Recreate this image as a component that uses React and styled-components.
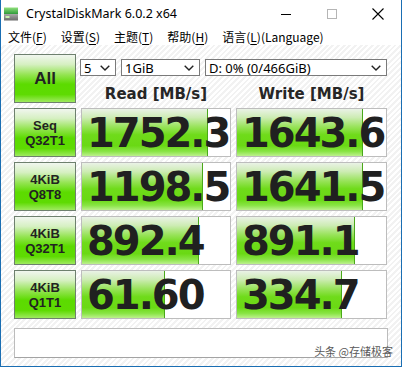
import styled, { createGlobalStyle } from "styled-components";

const GlobalStyle = createGlobalStyle`
  html, body {
    margin: 0;
    padding: 0;
    background: #fff;
  }
  body {
    font-family: "Noto Sans", "Noto Sans CJK SC", sans-serif;
  }
`;

const results = [
  { label: ["Seq", "Q32T1"], read: "1752.3", write: "1643.6" },
  { label: ["4KiB", "Q8T8"], read: "1198.5", write: "1641.5" },
  { label: ["4KiB", "Q32T1"], read: "892.4", write: "891.1" },
  { label: ["4KiB", "Q1T1"], read: "61.60", write: "334.7" },
];

// CrystalDiskMark draws the bar on a log scale
const barWidth = (v) => Math.min(100, (Math.log10(parseFloat(v) * 10) / 5) * 100);

const menus = [
  ["文件(", "F", ")"],
  ["设置(", "S", ")"],
  ["主题(", "T", ")"],
  ["帮助(", "H", ")"],
  ["语言(", "L", ")(Language)"],
];

function App() {
  return (
    <>
      <GlobalStyle />
      <Window>
        <TitleBar>
          <AppIcon />
          <Title>CrystalDiskMark 6.0.2 x64</Title>
          <Controls>
            <Control>
              <svg width="10" height="10" viewBox="0 0 10 10">
                <line x1="0" y1="5.5" x2="10" y2="5.5" stroke="#000" strokeWidth="1" />
              </svg>
            </Control>
            <Control>
              <svg width="10" height="10" viewBox="0 0 10 10">
                <rect x="0.5" y="0.5" width="9" height="9" fill="none" stroke="#b5b5b5" strokeWidth="1" />
              </svg>
            </Control>
            <Control>
              <svg width="12" height="12" viewBox="0 0 12 12">
                <path d="M0.5 0.5 L11.5 11.5 M11.5 0.5 L0.5 11.5" stroke="#000" strokeWidth="1.1" />
              </svg>
            </Control>
          </Controls>
        </TitleBar>

        <MenuBar>
          {menus.map(([a, key, b]) => (
            <MenuItem key={key}>
              {a}
              <u>{key}</u>
              {b}
            </MenuItem>
          ))}
        </MenuBar>

        <Body>
          <Board>
            <LabelButton $big>All</LabelButton>
            <TopPanel>
              <SelectRow>
                <Select $w={36}>
                  <span>5</span>
                  <Chevron />
                </Select>
                <Select $w={79}>
                  <span>1GiB</span>
                  <Chevron />
                </Select>
                <Select $w={182}>
                  <span>D: 0% (0/466GiB)</span>
                  <Chevron />
                </Select>
              </SelectRow>
              <HeaderRow>
                <Header>Read [MB/s]</Header>
                <Header>Write [MB/s]</Header>
              </HeaderRow>
            </TopPanel>

            {results.map((r) => (
              <Row key={r.label.join(r.read)}>
                <LabelButton>
                  <span>{r.label[0]}</span>
                  <span>{r.label[1]}</span>
                </LabelButton>
                <ValueCell>
                  <Bar style={{ width: `${barWidth(r.read)}%` }} />
                  <Value>{r.read}</Value>
                </ValueCell>
                <ValueCell>
                  <Bar style={{ width: `${barWidth(r.write)}%` }} />
                  <Value>{r.write}</Value>
                </ValueCell>
              </Row>
            ))}

            <Comment />
          </Board>
        </Body>

        <Watermark>头条 @存储极客</Watermark>
      </Window>
    </>
  );
}

function AppIcon() {
  return (
    <IconBox width="14" height="14" viewBox="0 0 14 14">
      <defs>
        <linearGradient id="ig" x1="0" y1="0" x2="0" y2="1">
          <stop offset="0" stopColor="#8fe07c" />
          <stop offset="1" stopColor="#2f9a3a" />
        </linearGradient>
        <linearGradient id="ib" x1="0" y1="0" x2="0" y2="1">
          <stop offset="0" stopColor="#a9a9a9" />
          <stop offset="1" stopColor="#6a6a6a" />
        </linearGradient>
      </defs>
      <rect x="0" y="0.5" width="14" height="6.5" fill="url(#ig)" />
      <rect x="0" y="7" width="14" height="6.5" fill="url(#ib)" />
      <rect x="1.5" y="9" width="4" height="2" fill="#c8f2b0" />
    </IconBox>
  );
}

function Chevron() {
  return (
    <svg width="10" height="6" viewBox="0 0 10 6">
      <polyline points="0.7,0.7 5,5 9.3,0.7" fill="none" stroke="#222" strokeWidth="1.4" />
    </svg>
  );
}

const Window = styled.div`
  position: relative;
  width: 402px;
  height: 367px;
  box-sizing: border-box;
  border: 1px solid #1a6eb3;
  border-top: none;
  display: flex;
  flex-direction: column;
  overflow: hidden;
`;

const TitleBar = styled.div`
  flex-shrink: 0;
  height: 27px;
  display: flex;
  align-items: center;
  padding-left: 3px;
  background: #fff;
`;

const IconBox = styled.svg`
  margin-right: 8px;
  margin-top: 1px;
`;

const Title = styled.span`
  font-size: 12.5px;
  color: #000;
`;

const Controls = styled.div`
  margin-left: auto;
  display: flex;
  height: 100%;
`;

const Control = styled.div`
  width: 46px;
  display: flex;
  align-items: center;
  justify-content: center;
`;

const MenuBar = styled.div`
  flex-shrink: 0;
  height: 18px;
  display: flex;
  align-items: center;
  gap: 14px;
  padding-left: 7px;
  background: #fff;
`;

const MenuItem = styled.span`
  font-size: 12px;
  color: #000;
  font-family: "Noto Sans CJK SC", "Noto Sans", sans-serif;
  u {
    text-underline-offset: 2px;
  }
`;

const Body = styled.div`
  flex: 1;
  min-height: 0;
  padding: 9px 0 0 13px;
  background: repeating-linear-gradient(
    135deg,
    #ffffff 0px,
    #ffffff 2px,
    #f2f2f2 2px,
    #f2f2f2 4px
  );
`;

const Board = styled.div`
  display: grid;
  grid-template-columns: 62px 150px 151px;
  grid-template-rows: repeat(5, 49px) 34px;
  gap: 5px;
`;

const Row = styled.div`
  display: contents;
`;

const LabelButton = styled.div`
  box-sizing: border-box;
  border: 1px solid #6e806e;
  background: linear-gradient(
    to bottom,
    #f1f6ef 0%,
    #d6f0c2 20%,
    #94e452 42%,
    #5cdb00 62%,
    #5edb02 84%,
    #9eea5e 100%
  );
  display: flex;
  flex-direction: column;
  align-items: center;
  justify-content: center;
  font-family: "Liberation Sans", Arial, sans-serif;
  font-weight: bold;
  font-size: ${(p) => (p.$big ? "17px" : "13px")};
  line-height: 15px;
  color: #222;
`;

const TopPanel = styled.div`
  grid-column: 2 / 4;
  display: flex;
  flex-direction: column;
`;

const SelectRow = styled.div`
  display: flex;
  gap: 5px;
  margin: 5px 0 0 -1px;
`;

const Select = styled.div`
  width: ${(p) => p.$w}px;
  height: 17px;
  box-sizing: border-box;
  border: 1px solid #7a7a7a;
  background: #fff;
  display: flex;
  align-items: center;
  justify-content: space-between;
  padding: 0 5px 0 3px;
  font-size: 13px;
  color: #000;
`;

const HeaderRow = styled.div`
  display: grid;
  grid-template-columns: 150px 151px;
  column-gap: 5px;
  margin-top: 9px;
`;

const Header = styled.div`
  text-align: center;
  font-family: "DejaVu Sans", sans-serif;
  font-weight: bold;
  font-size: 15px;
  line-height: 18px;
  color: #262626;
`;

const ValueCell = styled.div`
  box-sizing: border-box;
  border: 1px solid #bdbdbd;
  background: #fff;
  display: grid;
  overflow: hidden;
`;

const Bar = styled.div`
  grid-area: 1 / 1;
  box-sizing: border-box;
  border-right: 1px solid #4aa81a;
  background: linear-gradient(
    to bottom,
    #eaf2e6 0%,
    #cdecb4 18%,
    #98e35a 38%,
    #6fdb1a 55%,
    #6ad914 78%,
    #88e444 90%,
    #bdf08e 100%
  );
`;

const Value = styled.div`
  grid-area: 1 / 1;
  align-self: center;
  padding-left: 5px;
  font-family: "DejaVu Sans", sans-serif;
  font-weight: bold;
  font-size: 40px;
  letter-spacing: -2px;
  line-height: 1;
  color: #202020;
  white-space: nowrap;
  position: relative;
`;

const Comment = styled.div`
  grid-column: 1 / -1;
  height: 30px;
  margin-top: 4px;
  width: 374px;
  box-sizing: border-box;
  border: 1px solid #bcbcbc;
  border-bottom-color: #a3a3a3;
  background: #fff;
`;

const Watermark = styled.div`
  position: absolute;
  right: 8px;
  bottom: 7px;
  font-family: "Noto Sans CJK SC", sans-serif;
  font-size: 11px;
  color: #5a5a5a;
  text-shadow: 0 0 1px #fff;
`;

export default App;
